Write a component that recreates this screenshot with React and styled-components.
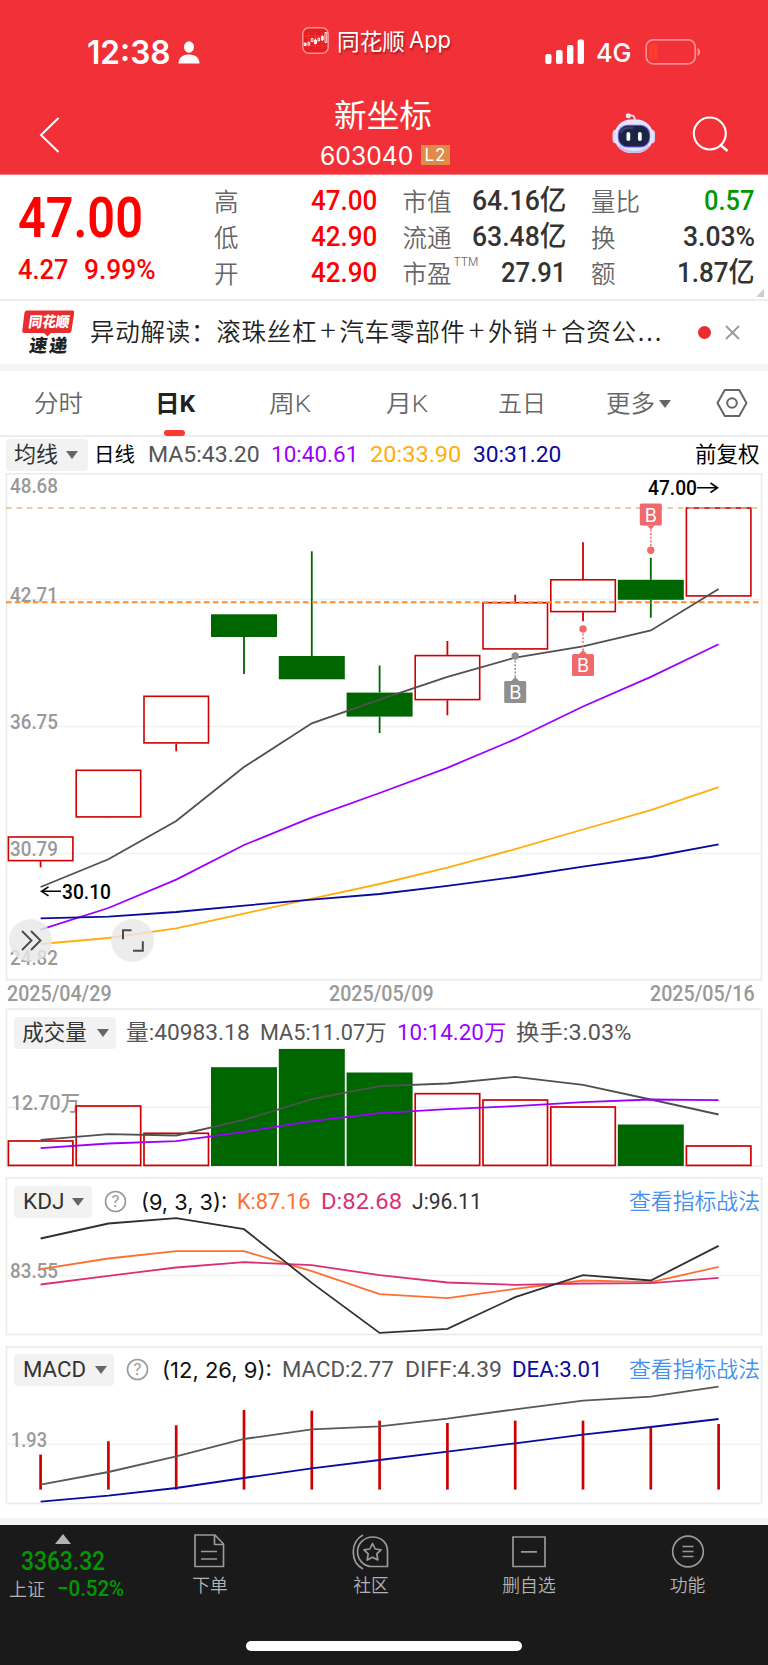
import React, { useLayoutEffect, useRef, useState } from 'react';
import styled, { createGlobalStyle } from 'styled-components';

const RED = '#f23038';
const UP = '#cf0000';
const DOWN = '#006600';
const MA_GRAY = '#505050';
const PURPLE = '#9b00ff';
const ORANGE = '#ffae0d';
const NAVY = '#0a0a9f';

const GlobalStyle = createGlobalStyle`
  * {
    box-sizing: border-box;
  }

  body {
    margin: 0;
    background: #fff;
    font-family: Roboto, 'Noto Sans CJK SC', sans-serif;
    color: #333;
    -webkit-font-smoothing: antialiased;
  }

  button {
    border: 0;
    padding: 0;
    background: none;
    font: inherit;
    color: inherit;
  }
`;

const FitStyled = styled.span`
  display: inline-block;
  flex: none;
  width: ${(p) => p.$w}px;
  margin-left: ${(p) => p.$ml || 0}px;
  font-family: ${(p) => p.$font || 'inherit'};
  font-size: ${(p) => (p.$size ? `${p.$size}px` : 'inherit')};
  font-weight: ${(p) => p.$weight || 'inherit'};
  color: ${(p) => p.$color || 'inherit'};
  line-height: inherit;
  white-space: nowrap;

  span {
    display: inline-block;
    transform-origin: 0 50%;
  }
`;

function Fit({ children, w, ml, size, color, weight, font }) {
  const ref = useRef(null);
  const [scale, setScale] = useState(1);

  useLayoutEffect(() => {
    setScale(w / ref.current.offsetWidth);
  }, [w, children]);

  return (
    <FitStyled $w={w} $ml={ml} $size={size} $color={color} $weight={weight} $font={font}>
      <span ref={ref} style={{ transform: `scaleX(${scale})` }}>{children}</span>
    </FitStyled>
  );
}

const PageStyled = styled.div`
  width: 768px;
  height: 1665px;
  overflow: hidden;
  display: flex;
  flex-direction: column;
  background: #fff;
`;

/* ---------- header ---------- */

const HeaderStyled = styled.header`
  height: 175px;
  flex: none;
  border-bottom: 1px solid #f77b80;
  background: ${RED};
  color: #fff;
`;

const StatusBarStyled = styled.div`
  display: flex;
  height: 86px;
  padding: 20px 0 0 87px;
  line-height: 66px;

  svg {
    flex: none;
  }

  .person {
    margin: 21px 0 0 7px;
  }

  .signal {
    margin: 19px 0 0 94px;
  }

  .battery {
    margin: 18px 0 0 13px;
  }
`;

const BrandStyled = styled.div`
  display: flex;
  margin-left: 102px;
  height: 42px;
  line-height: 40px;
  text-shadow: 1px 2px 2px rgba(90, 0, 0, 0.5);

  svg {
    margin: 7px 8px 0 0;
  }
`;

const NavBarStyled = styled.div`
  display: flex;
  justify-content: space-between;
  height: 88px;
  padding: 0 38px 0 38px;

  .back {
    margin-top: 29px;
  }
`;

const NavTitleStyled = styled.div`
  display: flex;
  flex-direction: column;
  align-items: center;
  margin-left: 98px;

  h1 {
    margin: 6px 0 0 -4px;
    height: 44px;
    font-weight: 400;
    line-height: 42px;
  }

  div {
    display: flex;
    align-items: center;
    height: 38px;
  }
`;

const LevelBadgeStyled = styled.span`
  width: 29px;
  height: 20px;
  margin-left: 8px;
  background: #e08c48;
  font-family: Inter, sans-serif;
  font-size: 17px;
  line-height: 20px;
  letter-spacing: 1px;
  text-align: center;
`;

const NavActionsStyled = styled.div`
  display: flex;

  .robot {
    margin: 26px 35px 0 0;
  }

  .search {
    margin-top: 28px;
  }
`;

/* ---------- quote ---------- */

const QuoteStyled = styled.section`
  position: relative;
  flex: none;
  display: grid;
  grid-template-columns: 170.5px 163px 163px 164px;
  column-gap: 25.5px;
  height: 126px;
  padding: 9px 0 0 18px;
  border-bottom: 2px solid #ededed;
`;

const PriceStyled = styled.div`
  color: #ff0000;

  .last {
    display: block;
    height: 69px;
    line-height: 69px;
  }

  .change {
    display: flex;
    height: 34px;
    line-height: 34px;
  }
`;

const StatListStyled = styled.dl`
  margin: -1px 0 0;

  div {
    display: flex;
    justify-content: space-between;
    height: 36px;
    line-height: 36px;
  }

  dt {
    font-family: 'Noto Sans CJK SC', sans-serif;
    font-weight: 350;
    font-size: 24.5px;
    color: #666;
  }

  dt sup {
    position: relative;
    top: 2px;
    margin-left: 2px;
    font-family: Inter, sans-serif;
    font-size: 11.5px;
    line-height: 1;
    vertical-align: top;
  }

  dd {
    margin: 0;
  }
`;

const CornerStyled = styled.i`
  position: absolute;
  right: 4px;
  bottom: 2px;
  border: 4.5px solid transparent;
  border-right-color: #ccc;
  border-bottom-color: #ccc;
`;

/* ---------- news ---------- */

const NewsStyled = styled.section`
  flex: none;
  display: flex;
  align-items: center;
  height: 70px;
  padding: 0 28px 0 22px;
  border-bottom: 7px solid #f4f4f4;
  font-family: 'Noto Sans CJK SC', sans-serif;

  p {
    flex: 1;
    margin: -4px 0 0 16px;
    font-size: 24.5px;
    font-weight: 350;
    line-height: 36px;
    letter-spacing: 0.75px;
    white-space: nowrap;
    color: #222;
  }

  p b {
    display: inline-block;
    width: 22.3px;
    font-size: 29px;
    font-weight: 300;
    line-height: 1;
    text-align: center;
  }

  p i {
    font-style: normal;
    letter-spacing: 2px;
    margin-left: 1px;
  }

  .dot {
    width: 13px;
    height: 13px;
    margin: 0 14px 0 0;
    border-radius: 50%;
    background: #e82c2f;
  }
`;

/* ---------- tabs ---------- */

const TabsStyled = styled.nav`
  flex: none;
  display: flex;
  height: 66px;
  border-bottom: 2px solid #ededed;
  background: #fff;
`;

const TabStyled = styled.button`
  position: relative;
  display: flex;
  align-items: center;
  justify-content: center;
  width: ${(p) => p.$w}px;
  height: 64px;
  padding-top: ${(p) => (p.$icon ? 0 : 2)}px;
  font-size: 24px;
  line-height: 36px;
  font-weight: ${(p) => (p.$active ? 700 : 350)};
  color: ${(p) => (p.$active ? '#222' : '#666')};

  &::after {
    content: '';
    display: ${(p) => (p.$active ? 'block' : 'none')};
    position: absolute;
    bottom: -1px;
    left: 50%;
    width: 21px;
    height: 6px;
    margin-left: -11px;
    border-radius: 3px;
    background: #fb3a30;
  }
`;

const CaretStyled = styled.i`
  width: 0;
  height: 0;
  margin-left: ${(p) => p.$ml}px;
  border: 6px solid transparent;
  border-top: 8px solid #666;
  border-bottom: 0;
`;

/* ---------- charts ---------- */

const LegendStyled = styled.div`
  display: flex;
  align-items: center;
  height: ${(p) => p.$h}px;
  padding: 0 8px 0 ${(p) => p.$left || 14}px;
  font-size: 22px;
  line-height: 32px;

  > :last-child {
    margin-left: ${(p) => (p.$push ? 'auto' : undefined)};
  }
`;

const PillStyled = styled.button`
  display: flex;
  align-items: center;
  flex: none;
  width: ${(p) => p.$w}px;
  height: 32px;
  padding-left: 8px;
  border-radius: 4px;
  background: #f2f2f2;
  font-size: 21.5px;
  line-height: 32px;
  color: #333;
`;

const HelpStyled = styled.svg`
  flex: none;
  margin-left: 12px;
`;

const PanelStyled = styled.section`
  flex: none;
  position: relative;
  display: grid;
  width: 768px;
  height: ${(p) => p.$h}px;
  margin-bottom: ${(p) => p.$mb || 0}px;

  > * {
    grid-area: 1 / 1;
    align-self: start;
  }

  > svg {
    display: block;
  }
`;

const DatesStyled = styled.div`
  flex: none;
  display: flex;
  justify-content: space-between;
  height: 27px;
  padding: 0 13px 0 7px;
  font-size: 21.5px;
  font-weight: 500;
  line-height: 26px;
  color: #999;
`;

const RoundButtonStyled = styled.button`
  position: absolute;
  left: ${(p) => p.$left}px;
  bottom: 19px;
  width: 43px;
  height: 43px;
  border-radius: 50%;
  background: rgba(232, 232, 232, 0.82);

  svg {
    display: block;
  }
`;

/* ---------- bottom bar ---------- */

const BottomStyled = styled.footer`
  flex: none;
  height: 147px;
  border-top: 7px solid #f4f4f4;
  background: #1a1a1a;
`;

const BottomRowStyled = styled.div`
  display: flex;
  height: 116px;
`;

const IndexStyled = styled.div`
  display: flex;
  flex-direction: column;
  width: 129px;
  color: #009900;

  .arrow {
    width: 0;
    margin: 9px 0 0 55px;
    border: 8px solid transparent;
    border-top: 0;
    border-bottom: 10px solid #b3b3b3;
  }

  .value {
    height: 34px;
    line-height: 34px;
    padding-left: 21px;
  }

  .rate {
    height: 20px;
    line-height: 20px;
    margin-top: 1px;
    padding-left: 9px;
  }
`;

const ActionStyled = styled.button`
  display: flex;
  flex-direction: column;
  align-items: center;
  width: ${(p) => p.$w}px;
  padding-top: 7px;
  font-size: 17.8px;
  font-weight: 350;
  line-height: 24px;
  color: #b3b3b3;

  svg {
    display: block;
    margin-bottom: 4px;
  }
`;

const HomeBarStyled = styled.div`
  width: 276px;
  height: 10px;
  margin: 0 auto;
  border-radius: 5px;
  background: #fff;
`;

const stats = [
  [
    { label: '高', value: '47.00', w: 66, color: '#ff0000' },
    { label: '低', value: '42.90', w: 66, color: '#ff0000' },
    { label: '开', value: '42.90', w: 66, color: '#ff0000' },
  ],
  [
    { label: '市值', value: '64.16亿', w: 94 },
    { label: '流通', value: '63.48亿', w: 94 },
    { label: '市盈', sup: 'TTM', value: '27.91', w: 65 },
  ],
  [
    { label: '量比', value: '0.57', w: 51, color: '#009900' },
    { label: '换', value: '3.03%', w: 72 },
    { label: '额', value: '1.87亿', w: 78 },
  ],
];

const tabs = [
  { text: '分时', w: 116, tw: 49 },
  { text: '日K', w: 117, tw: 40, active: true },
  { text: '周K', w: 112, tw: 42 },
  { text: '月K', w: 122, tw: 42 },
  { text: '五日', w: 110, tw: 48 },
  { text: '更多', w: 122, tw: 49, caret: true },
];

const centers = Array.from({ length: 11 }, (_, i) => 40.6 + i * 67.8);

// y of body top / bottom and of the wick ends
const candles = [
  { up: true, top: 836, bottom: 861, high: 836, low: 867 },
  { up: true, top: 769.3, bottom: 817.3, high: 769.3, low: 817 },
  { up: true, top: 695.3, bottom: 743.3, high: 695.3, low: 751 },
  { top: 614, bottom: 636.7, high: 614, low: 673.7 },
  { top: 655.7, bottom: 679, high: 551, low: 679 },
  { top: 692.3, bottom: 716.3, high: 665.3, low: 732.7 },
  { up: true, top: 654.6, bottom: 700, high: 640.8, low: 715 },
  { up: true, top: 601.7, bottom: 649.3, high: 594.5, low: 649 },
  { up: true, top: 578.8, bottom: 612, high: 542, low: 621 },
  { top: 579.5, bottom: 599.5, high: 557.5, low: 617.5 },
  { up: true, top: 507, bottom: 596.3, high: 507, low: 596 },
];

const volumes = [1140, 1105, 1132.3, 1067, 1048.7, 1072.3, 1092.7, 1099, 1106, 1124.3, 1145];
const macdBars = [1454.3, 1441, 1425, 1409.7, 1410.3, 1420.3, 1422.7, 1420.3, 1420.3, 1426.7, 1423.7];

const maLines = [
  { color: ORANGE, ys: [943.7, 937.7, 928, 913.3, 898.3, 883.7, 867.4, 848.8, 829.2, 809.9, 786.8] },
  { color: PURPLE, ys: [929.3, 907.7, 879.3, 844.7, 817, 792.7, 767.5, 738.9, 706.2, 676.6, 643.9] },
  { color: NAVY, ys: [918, 916.3, 911.7, 905.3, 899.3, 893.7, 885.6, 876.7, 866.3, 856.7, 844] },
  { color: MA_GRAY, ys: [886.7, 859, 820.7, 766.7, 723, 699.3, 676.6, 657.3, 646, 630.1, 588.8] },
];

const volumeLines = [
  { color: MA_GRAY, ys: [1139.7, 1134, 1135.3, 1119.7, 1099, 1086, 1083.3, 1076.7, 1084.7, 1099.3, 1114.3] },
  { color: PURPLE, ys: [1148, 1143.3, 1141, 1131.7, 1121, 1113, 1109, 1106, 1102, 1099.3, 1100] },
];

const kdjLines = [
  { color: '#ff6e30', ys: [1269, 1258.3, 1251, 1251, 1271, 1294, 1298, 1288.7, 1280.3, 1282, 1266.7] },
  { color: '#db2f76', ys: [1284.3, 1275.7, 1267.3, 1262, 1265, 1275, 1282.3, 1284.7, 1283.3, 1283, 1277.7] },
  { color: '#303030', ys: [1238.3, 1223.3, 1218, 1229, 1282.7, 1332.7, 1328.7, 1297, 1275, 1280.3, 1245.7] },
];

const macdLines = [
  { color: '#595959', ys: [1484.3, 1471.7, 1456, 1438.7, 1429, 1426, 1418.3, 1409, 1400.3, 1396.3, 1386.3] },
  { color: NAVY, ys: [1501.3, 1495.3, 1487.7, 1477.7, 1468, 1459.7, 1451.3, 1443, 1434.3, 1426.7, 1418.7] },
];

const Lines = ({ items }) => items.map((l) => (
  <polyline
    key={l.color}
    points={l.ys.map((y, i) => `${centers[i]},${y}`).join(' ')}
    fill='none'
    stroke={l.color}
    strokeWidth='1.8'
  />
));

const Frame = ({ top, bottom, grid }) => (
  <g fill='none' stroke='#ebebeb' strokeWidth='1.6'>
    <rect x='6.5' y={top} width='755' height={bottom - top} />
    {grid.map((y) => <path key={y} d={`M7 ${y}H761`} stroke='#f1f1f1' />)}
  </g>
);

const AxisText = ({ y, w, x = 10, children }) => (
  <text x={x} y={y} fontSize='21' fontWeight='500' fill='#999' textLength={w} lengthAdjust='spacingAndGlyphs'>{children}</text>
);

const Marker = ({ x, y, dot, color }) => {
  const above = y < dot;
  const edge = above ? y + 22 : y;
  return (
    <g fill={color}>
      <path d={`M${x} ${edge}V${dot}`} stroke={color} strokeWidth='1.5' strokeDasharray='2 1.7' />
      <path d={above ? `M${x - 4} ${edge}h8l-4 4z` : `M${x - 4} ${edge}h8l-4 -4z`} />
      <rect x={x - 11} y={y} width='22' height='22' rx='1.5' />
      <circle cx={x} cy={dot} r='3.7' />
      <text x={x} y={y + 18} textAnchor='middle' fontSize='18.5' fontFamily='Inter' fill='#fff'>B</text>
    </g>
  );
};

const Help = () => (
  <HelpStyled width='23' height='23' viewBox='0 0 23 23'>
    <circle cx='11.5' cy='11.5' r='10' fill='none' stroke='#999' strokeWidth='1.6' />
    <text x='11.5' y='17' textAnchor='middle' fontSize='15.5' fontFamily='Inter' fill='#999'>?</text>
  </HelpStyled>
);

function StatusBar() {
  return (
    <StatusBarStyled>
      <Fit w={84} size={32} weight={600} font='Inter'>12:38</Fit>
      <svg className='person' width='22' height='23' viewBox='0 0 22 23' fill='#fff'>
        <ellipse cx='11' cy='6' rx='5' ry='5.7' />
        <path d='M0.5 22.5C0.5 16.5 5 13.5 11 13.5S21.5 16.5 21.5 22.5z' />
      </svg>
      <BrandStyled>
        <svg width='27' height='27' viewBox='0 0 27 27'>
          <rect x='0.8' y='0.8' width='25.4' height='25.4' rx='6' fill='#e51e20' stroke='#ff8f92' strokeWidth='1.5' />
          <path d='M6.5 5V22M13.5 5V22M20 5V22M2 9H25M2 19H25' stroke='#f04446' strokeWidth='0.6' />
          <g fill='#fff' stroke='#fff' strokeWidth='0.9'>
            <path d='M2.2 16h2v2.5h-2zM12.3 13h2.3v3.4h-2.3zM19.5 9.5h1.7v3.5h-1.7zM13.4 11.5V17.5M20.3 8.5V14' />
            <path d='M6 15.2h1.7v3H6zM9.2 11.5h1.8v3H9.2zM16 11h1.6v3H16zM23 5.5h1.8v10H23z' fill='none' />
          </g>
        </svg>
        <Fit w={68} size={23} font="'Noto Sans CJK SC'">同花顺</Fit>
        <Fit w={42} ml={4} size={23.5} font='Inter'>App</Fit>
      </BrandStyled>
      <svg className='signal' width='40' height='26' viewBox='0 0 40 26' fill='#fff'>
        <rect x='0.3' y='15' width='6.2' height='10' rx='2' />
        <rect x='11' y='11' width='6.6' height='14' rx='2' />
        <rect x='22' y='6' width='6.4' height='19' rx='2' />
        <rect x='32.6' y='0.5' width='6.4' height='24.5' rx='2' />
      </svg>
      <Fit w={36} ml={11} size={26} weight={500} font='Inter'>4G</Fit>
      <svg className='battery' width='58' height='28' viewBox='0 0 58 28'>
        <rect x='1.2' y='1.8' width='49' height='24' rx='7' fill='none' stroke='#f98d90' strokeWidth='1.7' />
        <rect x='4.2' y='5.2' width='8.3' height='17' rx='4' fill='#ff3c2e' />
        <path d='M52.5 10c3.6 1 3.6 7 0 8z' fill='#f98d90' />
      </svg>
    </StatusBarStyled>
  );
}

function NavBar() {
  return (
    <NavBarStyled>
      <svg className='back' width='23' height='40' viewBox='0 0 23 40'>
        <path d='M20.5 3L3 20L20.5 37' fill='none' stroke='#fff' strokeWidth='2' />
      </svg>
      <NavTitleStyled>
        <h1><Fit w={98} size={32} font="'Noto Sans CJK SC'">新坐标</Fit></h1>
        <div>
          <Fit w={93} size={25.5} font='Inter'>603040</Fit>
          <LevelBadgeStyled>L2</LevelBadgeStyled>
        </div>
      </NavTitleStyled>
      <NavActionsStyled>
        <svg className='robot' width='46' height='42' viewBox='0 0 46 42'>
          <path d='M16.5 3.7C22 2.5 24.3 4 23.6 9' fill='none' stroke='#dfe1fb' strokeWidth='1.8' />
          <circle cx='17.2' cy='3.7' r='2.5' fill='#e9eafc' />
          <rect x='1.5' y='17.5' width='8' height='14' rx='4' fill='#d9d6f7' />
          <rect x='36' y='17.5' width='8' height='14' rx='4' fill='#d9d6f7' />
          <rect x='3.5' y='7.5' width='38.5' height='33.5' rx='16' fill='#e6e6fb' />
          <path d='M8 34c7 8 23 8 30 0' fill='none' stroke='#c3c2ee' strokeWidth='2' />
          <rect x='6.8' y='12.8' width='32.4' height='22.8' rx='9.5' fill='#7d63e8' />
          <rect x='7.7' y='13.8' width='30.6' height='20.8' rx='9' fill='#1d2547' />
          <path d='M10 21c1-5 6-6 12-5' fill='none' stroke='#3b466b' strokeWidth='2' />
          <rect x='15.5' y='20' width='3.7' height='9' rx='1.8' fill='#fff' />
          <rect x='27' y='20' width='3.7' height='9' rx='1.8' fill='#fff' />
        </svg>
        <svg className='search' width='38' height='38' viewBox='0 0 38 38' fill='none' stroke='#fff' strokeWidth='2.1'>
          <circle cx='17.8' cy='19.5' r='16' />
          <path d='M28 30.5l7.5 6.5' strokeWidth='2.5' />
        </svg>
      </NavActionsStyled>
    </NavBarStyled>
  );
}

function Quote() {
  return (
    <QuoteStyled>
      <PriceStyled>
        <span className='last'><Fit w={125} size={56} weight={600}>47.00</Fit></span>
        <div className='change'>
          <Fit w={51} size={28.5} weight={500}>4.27</Fit>
          <Fit w={72} ml={15} size={28.5} weight={500}>9.99%</Fit>
        </div>
      </PriceStyled>
      {stats.map((group, i) => (
        <StatListStyled key={i}>
          {group.map((s) => (
            <div key={s.label}>
              <dt>{s.label}{s.sup && <sup>{s.sup}</sup>}</dt>
              <dd><Fit w={s.w} size={28} weight={500} color={s.color}>{s.value}</Fit></dd>
            </div>
          ))}
        </StatListStyled>
      ))}
      <CornerStyled />
    </QuoteStyled>
  );
}

function News() {
  return (
    <NewsStyled>
      <svg width='52' height='54' viewBox='0 0 52 54' fontFamily='Noto Sans CJK SC' fontWeight='900'>
        <path d='M5 4.500H51Q52.500 4.500 52.300 6.500L49.500 24.500Q49 27 47 27H29L25.500 30.500L22 27H2Q0 27 .3 24.500L2.500 6.500Q3 4.500 5 4.500z' fill='#e82c2f' />
        <text transform='translate(6 21) skewX(-8)' fontSize='14.5' fill='#fff' textLength='41' lengthAdjust='spacingAndGlyphs'>同花顺</text>
        <text transform='translate(6.5 45.5) skewX(-8)' fontSize='18' fill='#222' textLength='38' lengthAdjust='spacing'>速递</text>
      </svg>
      <p>异动解读：滚珠丝杠<b>+</b>汽车零部件<b>+</b>外销<b>+</b>合资公<i>...</i></p>
      <span className='dot' />
      <svg width='15' height='15' viewBox='0 0 15 15'>
        <path d='M1 1L14 14M14 1L1 14' stroke='#999' strokeWidth='1.8' />
      </svg>
    </NewsStyled>
  );
}

function Tabs() {
  return (
    <TabsStyled>
      {tabs.map((t) => (
        <TabStyled key={t.text} $w={t.w} $active={t.active}>
          <Fit w={t.tw} size={24}>{t.text}</Fit>
          {t.caret && <CaretStyled $ml={4} />}
        </TabStyled>
      ))}
      <TabStyled $w={66} $icon>
        <svg width='32' height='30' viewBox='0 0 32 30' fill='none' stroke='#666' strokeWidth='2'>
          <path d='M8.8 2H23.2L30.5 15L23.2 28H8.8L1.5 15z' strokeLinejoin='round' />
          <circle cx='16' cy='15' r='4.8' />
        </svg>
      </TabStyled>
    </TabsStyled>
  );
}

function KLineChart() {
  return (
    <PanelStyled $h={508}>
      <svg width='768' height='508' viewBox='0 472.7 768 508'>
        <Frame top={473.5} bottom={979.5} grid={[599.2, 726.2, 853.2]} />
        <AxisText y={493} w={48}>48.68</AxisText>
        <AxisText y={602} w={48}>42.71</AxisText>
        <AxisText y={729} w={48}>36.75</AxisText>
        <AxisText y={856} w={48}>30.79</AxisText>
        <AxisText y={965} w={48}>24.82</AxisText>
        {candles.map((c, i) => (
          <g key={i} stroke={c.up ? UP : DOWN} strokeWidth='1.8'>
            <path d={`M${centers[i]} ${c.high}V${c.top}M${centers[i]} ${c.bottom}V${c.low}`} />
            {c.up
              ? <rect x={centers[i] - 32.2} y={c.top + 0.7} width='64.5' height={c.bottom - c.top - 1.4} fill='none' strokeWidth='1.6' />
              : <rect x={centers[i] - 33} y={c.top} width='66' height={c.bottom - c.top} fill={DOWN} stroke='none' />}
          </g>
        ))}
        <path d='M6 507.7H762' stroke='#dcb98a' strokeOpacity='0.75' strokeWidth='1.8' strokeDasharray='5.5 5' />
        <path d='M6 602H762' stroke='#ff8a2b' strokeWidth='2' strokeDasharray='5.5 3.5' />
        <Lines items={maLines} />
        <g fill='#000' fontSize='20.5' fontWeight='500'>
          <text x='648' y='494.7' textLength='49' lengthAdjust='spacingAndGlyphs'>47.00</text>
          <text x='62' y='898.5' textLength='49' lengthAdjust='spacingAndGlyphs'>30.10</text>
          <path d='M697 487.5H717M710.5 482.7L717.5 487.5L710.5 492.2' fill='none' stroke='#000' strokeWidth='1.6' />
          <path d='M61 891H42M48.5 886.5L41.5 891L48.5 895.5' fill='none' stroke='#000' strokeWidth='1.6' />
        </g>
        <Marker x={650.8} y={503.3} dot={550} color='#f16a6b' />
        <Marker x={583} y={653.8} dot={628.7} color='#f16a6b' />
        <Marker x={515.2} y={680.7} dot={655.7} color='#8f8f8f' />
      </svg>
      <RoundButtonStyled $left={9}>
        <svg width='43' height='43' viewBox='0 0 43 43' fill='none' stroke='#4a4a4a' strokeWidth='1.9'>
          <path d='M13 12L22.5 21.5L13 31M22 12L31.5 21.5L22 31' />
        </svg>
      </RoundButtonStyled>
      <RoundButtonStyled $left={111}>
        <svg width='43' height='43' viewBox='0 0 43 43' fill='none' stroke='#4a4a4a' strokeWidth='2'>
          <path d='M20.5 11.3H12V20.3M22 31.7H31.8V22.3' />
        </svg>
      </RoundButtonStyled>
    </PanelStyled>
  );
}

function VolumePanel() {
  return (
    <PanelStyled $h={160} $mb={9}>
      <svg width='768' height='160' viewBox='0 1007.8 768 160'>
        <Frame top={1008.8} bottom={1166} grid={[1107.2]} />
        <AxisText x={11} y={1110} w={69}>12.70万</AxisText>
        {volumes.map((y, i) => (
          candles[i].up
            ? <rect key={i} x={centers[i] - 32.2} y={y + 0.8} width='64.5' height={1164.4 - y} fill='none' stroke={UP} strokeWidth='1.7' />
            : <rect key={i} x={centers[i] - 33} y={y} width='66' height={1165.8 - y} fill={DOWN} />
        ))}
        <Lines items={volumeLines} />
      </svg>
      <LegendStyled $h={50}>
        <PillStyled $w={102}><Fit w={65}>成交量</Fit><CaretStyled $ml={10} /></PillStyled>
        <Fit w={124} ml={10} color='#555'>量:40983.18</Fit>
        <Fit w={127} ml={10} color='#555'>MA5:11.07万</Fit>
        <Fit w={109} ml={10} color={PURPLE}>10:14.20万</Fit>
        <Fit w={115} ml={10} color='#555'>换手:3.03%</Fit>
      </LegendStyled>
    </PanelStyled>
  );
}

function KdjPanel() {
  return (
    <PanelStyled $h={160} $mb={9}>
      <svg width='768' height='160' viewBox='0 1176.8 768 160'>
        <Frame top={1177.7} bottom={1334.3} grid={[1275.3]} />
        <AxisText y={1278.3} w={48}>83.55</AxisText>
        <Lines items={kdjLines} />
      </svg>
      <LegendStyled $h={49} $push>
        <PillStyled $w={78}><Fit w={41}>KDJ</Fit><CaretStyled $ml={9} /></PillStyled>
        <Help />
        <Fit w={86} ml={14} color='#111' font='Inter'>(9, 3, 3):</Fit>
        <Fit w={73} ml={10} color='#ff6e30'>K:87.16</Fit>
        <Fit w={81} ml={11} color='#db2f76'>D:82.68</Fit>
        <Fit w={70} ml={10} color='#333'>J:96.11</Fit>
        <Fit w={131} size={22} weight={350} color='#428fee'>查看指标战法</Fit>
      </LegendStyled>
    </PanelStyled>
  );
}

function MacdPanel() {
  return (
    <PanelStyled $h={159} $mb={13}>
      <svg width='768' height='159' viewBox='0 1345.7 768 159'>
        <Frame top={1346.6} bottom={1503.2} grid={[1444]} />
        <AxisText x={11} y={1447} w={36}>1.93</AxisText>
        {macdBars.map((y, i) => (
          <path key={i} d={`M${centers[i]} ${y}V1489.3`} stroke={UP} strokeWidth='2.7' />
        ))}
        <Lines items={macdLines} />
      </svg>
      <LegendStyled $h={47} $push>
        <PillStyled $w={100}><Fit w={63}>MACD</Fit><CaretStyled $ml={10} /></PillStyled>
        <Help />
        <Fit w={110} ml={13} color='#111' font='Inter'>(12, 26, 9):</Fit>
        <Fit w={112} ml={10} color='#555'>MACD:2.77</Fit>
        <Fit w={97} ml={11} color='#555'>DIFF:4.39</Fit>
        <Fit w={91} ml={10} color={NAVY}>DEA:3.01</Fit>
        <Fit w={131} size={22} weight={350} color='#428fee'>查看指标战法</Fit>
      </LegendStyled>
    </PanelStyled>
  );
}

function BottomBar() {
  return (
    <BottomStyled>
      <BottomRowStyled>
        <IndexStyled>
          <i className='arrow' />
          <div className='value'><Fit w={84} size={25.5} weight={500}>3363.32</Fit></div>
          <div className='rate'>
            <Fit w={36} size={18} weight={350} color='#b3b3b3'>上证</Fit>
            <Fit w={67} ml={12} size={22} weight={500}>−0.52%</Fit>
          </div>
        </IndexStyled>
        <ActionStyled $w={162}>
          <svg width='36' height='38' viewBox='0 0 36 38' fill='none' stroke='#999' strokeWidth='1.7'>
            <path d='M4.5 3H23L31.5 12V34.5H3V3zM22.5 3V12.5H31.5M9 19.5H25M9 27H25' />
          </svg>
          下单
        </ActionStyled>
        <ActionStyled $w={160}>
          <svg width='38' height='38' viewBox='0 0 38 38' fill='none' stroke='#999' strokeWidth='1.7'>
            <path d='M20.5 5C30.5 5 35.5 12 35.5 19V34.5H20.5C11 34.5 5.5 27 5.5 19.5S12 5 20.5 5z' />
            <path d='M11 3C-2 10 -2 30 11 37' />
            <path d='M20.5 11.5L23.2 17L29 17.8L24.8 21.9L25.8 28L20.5 25.2L15.2 28L16.2 21.9L12 17.8L17.8 17z' strokeLinejoin='round' />
          </svg>
          社区
        </ActionStyled>
        <ActionStyled $w={156}>
          <svg width='36' height='38' viewBox='0 0 36 38' fill='none' stroke='#999' strokeWidth='1.7'>
            <path d='M2 5H34V34.5H2zM10 19.8H26' />
          </svg>
          删自选
        </ActionStyled>
        <ActionStyled $w={161}>
          <svg width='36' height='38' viewBox='0 0 36 38' fill='none' stroke='#999' strokeWidth='1.7'>
            <circle cx='18' cy='19.5' r='15.3' />
            <path d='M12.5 14.5H23.5M12.5 19.5H23.5M12.5 24.5H23.5' />
          </svg>
          功能
        </ActionStyled>
      </BottomRowStyled>
      <HomeBarStyled />
    </BottomStyled>
  );
}

export default function App() {
  return (
    <>
      <GlobalStyle />
      <PageStyled>
        <HeaderStyled>
          <StatusBar />
          <NavBar />
        </HeaderStyled>
        <Quote />
        <News />
        <Tabs />
        <LegendStyled $h={36} $left={6} $push>
          <PillStyled $w={82}><Fit w={44}>均线</Fit><CaretStyled $ml={8} /></PillStyled>
          <Fit w={41} ml={6} size={20.5} color='#000'>日线</Fit>
          <Fit w={112} ml={13} color='#555'>MA5:43.20</Fit>
          <Fit w={87} ml={11} color={PURPLE}>10:40.61</Fit>
          <Fit w={91} ml={12} color={ORANGE}>20:33.90</Fit>
          <Fit w={88} ml={12} color={NAVY}>30:31.20</Fit>
          <Fit w={65} size={21.5} color='#000'>前复权</Fit>
        </LegendStyled>
        <KLineChart />
        <DatesStyled>
          <Fit w={105}>2025/04/29</Fit>
          <Fit w={105}>2025/05/09</Fit>
          <Fit w={105}>2025/05/16</Fit>
        </DatesStyled>
        <VolumePanel />
        <KdjPanel />
        <MacdPanel />
        <BottomBar />
      </PageStyled>
    </>
  );
}
